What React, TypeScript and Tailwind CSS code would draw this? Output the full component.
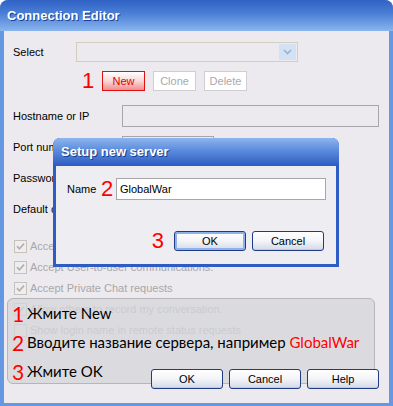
import React from 'react';

const XpButton: React.FC<{ children: React.ReactNode; isDefault?: boolean }> = ({ children, isDefault }) => (
  <div
    className={`h-[20px] w-[72px] rounded-[3px] border border-[#1F3B84] bg-gradient-to-b from-white via-[#F3F4F7] to-[#D3D9E7] flex items-center justify-center text-[11px] text-black ${
      isDefault ? 'shadow-[inset_0_0_0_2px_#8FB0EA]' : 'shadow-[inset_0_-1px_0_#C3CADB]'
    }`}
  >
    {children}
  </div>
);

const SmallButton: React.FC<{ children: React.ReactNode; active?: boolean }> = ({ children, active }) => (
  <div
    className={`h-[20px] w-[43px] flex items-center justify-center text-[11px] border ${
      active
        ? 'border-[#E01010] bg-gradient-to-b from-white via-[#F8D8D8] to-[#EE8E8E] text-[#E00000]'
        : 'border-[#CFCFD2] bg-white text-[#A9A8AC]'
    }`}
  >
    {children}
  </div>
);

const CheckRow: React.FC<{ label: string; checked?: boolean }> = ({ label, checked = true }) => (
  <div className="h-[21px] flex items-center pl-[1px] gap-[3px]">
    <span className="w-[13px] h-[13px] border border-[#C6C3BC] bg-[#EEEDF0] flex items-center justify-center shrink-0">
      {checked && (
        <svg width="9" height="9" viewBox="0 0 9 9">
          <path d="M1 4.2 L3.4 6.8 L8 1.6" fill="none" stroke="#B4B1AA" strokeWidth="1.7" />
        </svg>
      )}
    </span>
    <span className="text-[11px] text-[#A8A7AB] whitespace-nowrap">{label}</span>
  </div>
);

export default function App() {
  return (
    <div className="w-[393px] h-[406px] bg-white font-['Liberation_Sans',Arial,sans-serif]">
      <div className="relative w-full h-full rounded-t-[8px] bg-[#6498E2] flex flex-col overflow-hidden">
        {/* Title bar */}
        <div className="h-[31px] shrink-0 bg-[linear-gradient(to_bottom,#2F62C4,#4C80D6_45%,#8AB5EE)] flex items-center pl-[7px] text-white font-bold text-[13px] [text-shadow:1px_1px_0_#1B3F8F]">
          Connection Editor
        </div>

        {/* Body */}
        <div className="flex-1 mx-[4px] mb-[3px] bg-[#ECEAEE] flex flex-col pl-[9px] pr-[10px] text-[11px] text-black">
          <div className="flex items-center h-[20px] mt-[11px]">
            <span className="w-[63px]">Select</span>
            <div className="w-[222px] h-[20px] border border-[#D3CFBF] bg-[#ECEAEE] flex justify-end p-[1px]">
              <div className="w-[17px] h-full bg-[#D3E1F5] flex items-center justify-center">
                <svg width="9" height="6" viewBox="0 0 9 6">
                  <path d="M1 1 L4.5 4.5 L8 1" fill="none" stroke="#9DB0CC" strokeWidth="1.6" />
                </svg>
              </div>
            </div>
          </div>

          <div className="flex items-center h-[20px] mt-[9px] pl-[69px] gap-[8px]">
            <span className="w-[12px] text-[22px] leading-none text-[#FF0000]">1</span>
            <SmallButton active>New</SmallButton>
            <SmallButton>Clone</SmallButton>
            <SmallButton>Delete</SmallButton>
          </div>

          <div className="flex items-center h-[22px] mt-[14px]">
            <span className="w-[109px]">Hostname or IP</span>
            <div className="w-[257px] h-[22px] border border-[#A7A7AA]" />
          </div>
          <div className="flex items-center h-[22px] mt-[9px]">
            <span className="w-[109px]">Port number</span>
            <div className="w-[92px] h-[22px] border border-[#A7A7AA]" />
          </div>
          <div className="flex items-center h-[22px] mt-[9px]">
            <span className="w-[109px]">Password</span>
          </div>
          <div className="flex items-center h-[22px] mt-[9px]">
            <span className="w-[109px]">Default channel</span>
          </div>

          <div className="flex flex-col mt-[16px]">
            <CheckRow label="Accept channel invitations." />
            <CheckRow label="Accept User-to-user communications." />
            <CheckRow label="Accept Private Chat requests" />
            <CheckRow label="Allow others to record my conversation." />
            <CheckRow label="Show login name in remote status requests" checked={false} />
          </div>

          <div className="relative z-10 flex justify-end gap-[6px] mt-[28px]">
            <XpButton>OK</XpButton>
            <XpButton>Cancel</XpButton>
            <XpButton>Help</XpButton>
          </div>
        </div>

        {/* Annotation panel */}
        <div className="absolute left-[7px] top-[298px] w-[368px] h-[86px] rounded-[6px] border border-[#B6B5B9] bg-[#D6D5D9]/75 flex flex-col pl-[4px] font-['Lato',sans-serif] text-[15px] text-black whitespace-nowrap">
          <div className="h-[29px] flex items-center">
            <span className="w-[15px] text-[21px] text-[#FF0000]">1</span>
            <span>Жмите New</span>
          </div>
          <div className="h-[29px] flex items-center">
            <span className="w-[15px] text-[21px] text-[#FF0000]">2</span>
            <span>
              Вводите название сервера, например <span className="text-[#FF0000]">GlobalWar</span>
            </span>
          </div>
          <div className="h-[29px] flex items-center">
            <span className="w-[15px] text-[21px] text-[#FF0000]">3</span>
            <span>Жмите OK</span>
          </div>
        </div>

        {/* Setup dialog */}
        <div className="absolute left-[53px] top-[138px] w-[286px] h-[129px] rounded-t-[7px] bg-[#2F5CC4] flex flex-col z-20">
          <div className="h-[28px] shrink-0 bg-[linear-gradient(to_bottom,#8DB5EE,#5A8BDC_45%,#2D5BC2)] rounded-t-[7px] flex items-center pl-[8px] text-white font-bold text-[13px] [text-shadow:1px_1px_0_#1B3F8F]">
            Setup new server
          </div>
          <div className="flex-1 mx-[3px] mb-[3px] bg-[#EEEDF1] flex flex-col text-[11px]">
            <div className="flex items-center h-[22px] mt-[12px] pl-[11px]">
              <span className="w-[34px]">Name</span>
              <span className="w-[15px] text-[22px] leading-none text-[#FF0000]">2</span>
              <div className="w-[210px] h-[22px] border border-[#A7A7AA] bg-white flex items-center pl-[3px] text-[11px]">
                GlobalWar
              </div>
            </div>
            <div className="flex items-center justify-end h-[20px] mt-[31px] pr-[12px] gap-[6px]">
              <span className="text-[22px] leading-none text-[#FF0000] mr-[4px]">3</span>
              <XpButton isDefault>OK</XpButton>
              <XpButton>Cancel</XpButton>
            </div>
          </div>
        </div>
      </div>
    </div>
  );
}
